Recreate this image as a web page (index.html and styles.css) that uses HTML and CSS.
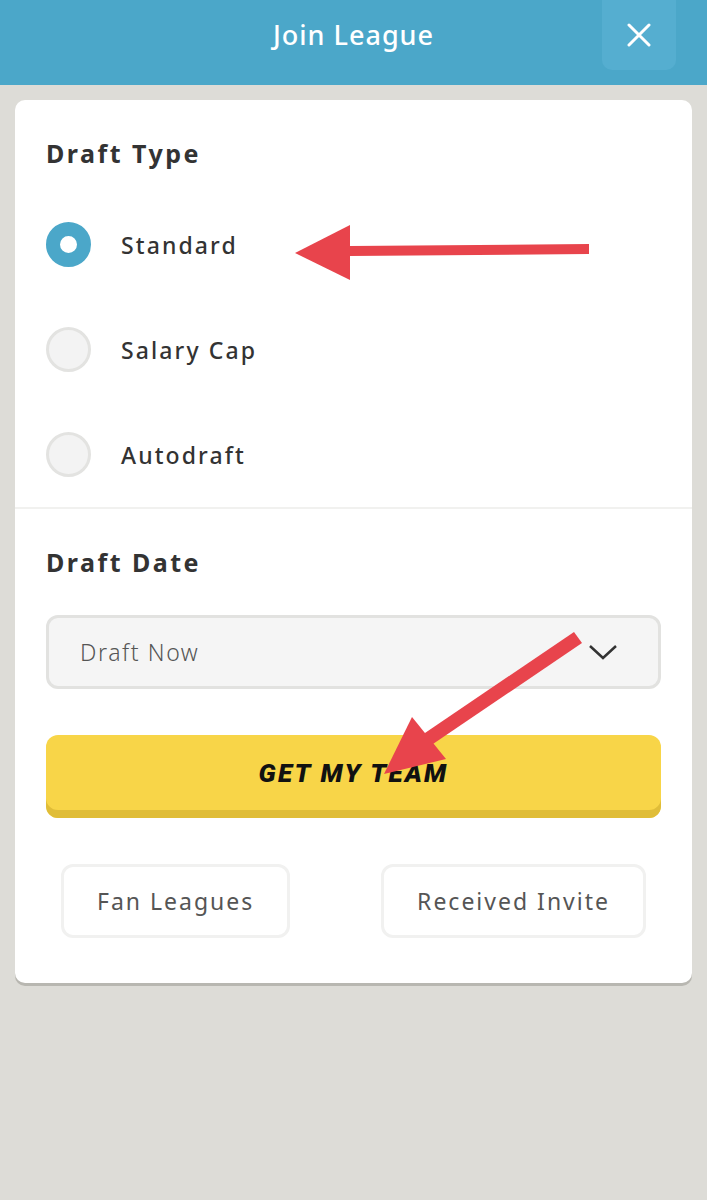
FILE: index.html
```html
<!DOCTYPE html>
<html lang="en">

<head>
    <meta charset="UTF-8">
    <meta name="viewport" content="width=device-width, initial-scale=1.0">
    <title>Join League</title>
    <link rel="stylesheet" href="styles.css">
</head>

<body>
    <header class="topbar">
        <span></span>
        <h1 class="topbar-title">Join League</h1>
        <button class="close-btn" aria-label="Close">
            <svg width="24" height="24" viewBox="0 0 24 24">
                <path d="M2 2 L22 22 M22 2 L2 22" stroke="#fff" stroke-width="3" stroke-linecap="round" />
            </svg>
        </button>
    </header>

    <main class="card">
        <section class="section section-type">
            <h2 class="section-title">Draft Type</h2>
            <div class="radio-list">
                <label class="radio-row">
                    <span class="radio radio-on"></span>
                    <span class="radio-label">Standard</span>
                </label>
                <label class="radio-row">
                    <span class="radio"></span>
                    <span class="radio-label">Salary Cap</span>
                </label>
                <label class="radio-row">
                    <span class="radio"></span>
                    <span class="radio-label">Autodraft</span>
                </label>
            </div>
        </section>

        <section class="section section-date">
            <h2 class="section-title">Draft Date</h2>
            <div class="select">
                <span class="select-value">Draft Now</span>
                <svg class="chevron" width="30" height="18" viewBox="0 0 30 18">
                    <path d="M2 3 L15 15 L28 3" fill="none" stroke="#333" stroke-width="2.5" />
                </svg>
            </div>
            <button class="cta">GET MY TEAM</button>
            <div class="links">
                <button class="link-btn">Fan Leagues</button>
                <button class="link-btn">Received Invite</button>
            </div>
        </section>
    </main>

    <!-- annotation arrows drawn over the screenshot -->
    <svg class="annotations" width="707" height="1200" viewBox="0 0 707 1200">
        <path d="M350 246 L589 244 L589 254 L350 256 Z" fill="#e8444c" />
        <path d="M295 253 L350 225 L350 280 Z" fill="#e8444c" />
        <path d="M574 632 L582 643 L430 746 L422 735 Z" fill="#e8444c" />
        <path d="M384 774 L412 717 L446 759 Z" fill="#e8444c" />
    </svg>
</body>

</html>
```

FILE: styles.css
```css
body {
    margin: 0;
    background-color: #dddcd7;
    font-family: "Noto Sans", Arial, sans-serif;
    min-height: 1200px;
    position: relative;
}

.topbar {
    display: grid;
    grid-template-columns: 1fr auto 1fr;
    align-items: center;
    height: 85px;
    background-color: #4ba7c9;
}

.topbar-title {
    margin: 0;
    padding-bottom: 16px;
    color: #fff;
    font-size: 27px;
    font-weight: 500;
    letter-spacing: 1px;
}

.close-btn {
    justify-self: end;
    align-self: start;
    display: flex;
    align-items: center;
    justify-content: center;
    width: 74px;
    height: 70px;
    margin-right: 31px;
    padding: 0;
    border: none;
    border-radius: 0 0 10px 10px;
    background-color: #55aed0;
}

.card {
    margin: 15px 15px 0;
    background-color: #fff;
    border-radius: 10px;
    box-shadow: 0 3px 0 #b8b7b1;
}

.section {
    padding: 0 31px;
}

.section-type {
    padding-top: 36px;
    padding-bottom: 30px;
    border-bottom: 2px solid #f1f1ef;
}

.section-date {
    padding-top: 36px;
    padding-bottom: 45px;
}

.section-title {
    margin: 0;
    color: #333;
    font-size: 25px;
    font-weight: 700;
    letter-spacing: 2.5px;
    line-height: 34px;
}

.radio-list {
    display: flex;
    flex-direction: column;
    gap: 60px;
    margin-top: 52px;
}

.radio-row {
    display: flex;
    align-items: center;
    gap: 30px;
    height: 45px;
}

.radio {
    box-sizing: border-box;
    width: 45px;
    height: 45px;
    border-radius: 50%;
    border: 3px solid #e3e3e1;
    background-color: #f3f3f3;
}

.radio-on {
    border: 14px solid #4ba7c9;
    background-color: #fff;
}

.radio-label {
    color: #333;
    font-size: 23px;
    font-weight: 500;
    letter-spacing: 2.1px;
}

.select {
    display: flex;
    align-items: center;
    justify-content: space-between;
    box-sizing: border-box;
    height: 74px;
    margin-top: 36px;
    padding: 0 40px 0 31px;
    border: 3px solid #e2e2e0;
    border-radius: 12px;
    background-color: #f5f5f5;
}

.select-value {
    color: #555;
    font-size: 23px;
    font-weight: 300;
    letter-spacing: 1.6px;
}

.cta {
    display: block;
    width: 100%;
    height: 83px;
    margin-top: 46px;
    padding: 0 0 8px;
    border: none;
    border-radius: 12px;
    background-color: #f8d548;
    box-shadow: inset 0 -8px 0 #e0bd38;
    color: #111;
    font-family: Roboto, Arial, sans-serif;
    font-size: 26px;
    font-weight: 900;
    font-style: italic;
    letter-spacing: 2.2px;
}

.links {
    display: flex;
    justify-content: space-between;
    margin-top: 46px;
    padding: 0 15px;
}

.link-btn {
    height: 74px;
    padding: 0 33px;
    border: 3px solid #f1f1f0;
    border-radius: 12px;
    background-color: #fff;
    color: #555;
    font-family: "Noto Sans", Arial, sans-serif;
    font-size: 23px;
    letter-spacing: 2px;
}

.annotations {
    position: absolute;
    top: 0;
    left: 0;
    pointer-events: none;
}
```
